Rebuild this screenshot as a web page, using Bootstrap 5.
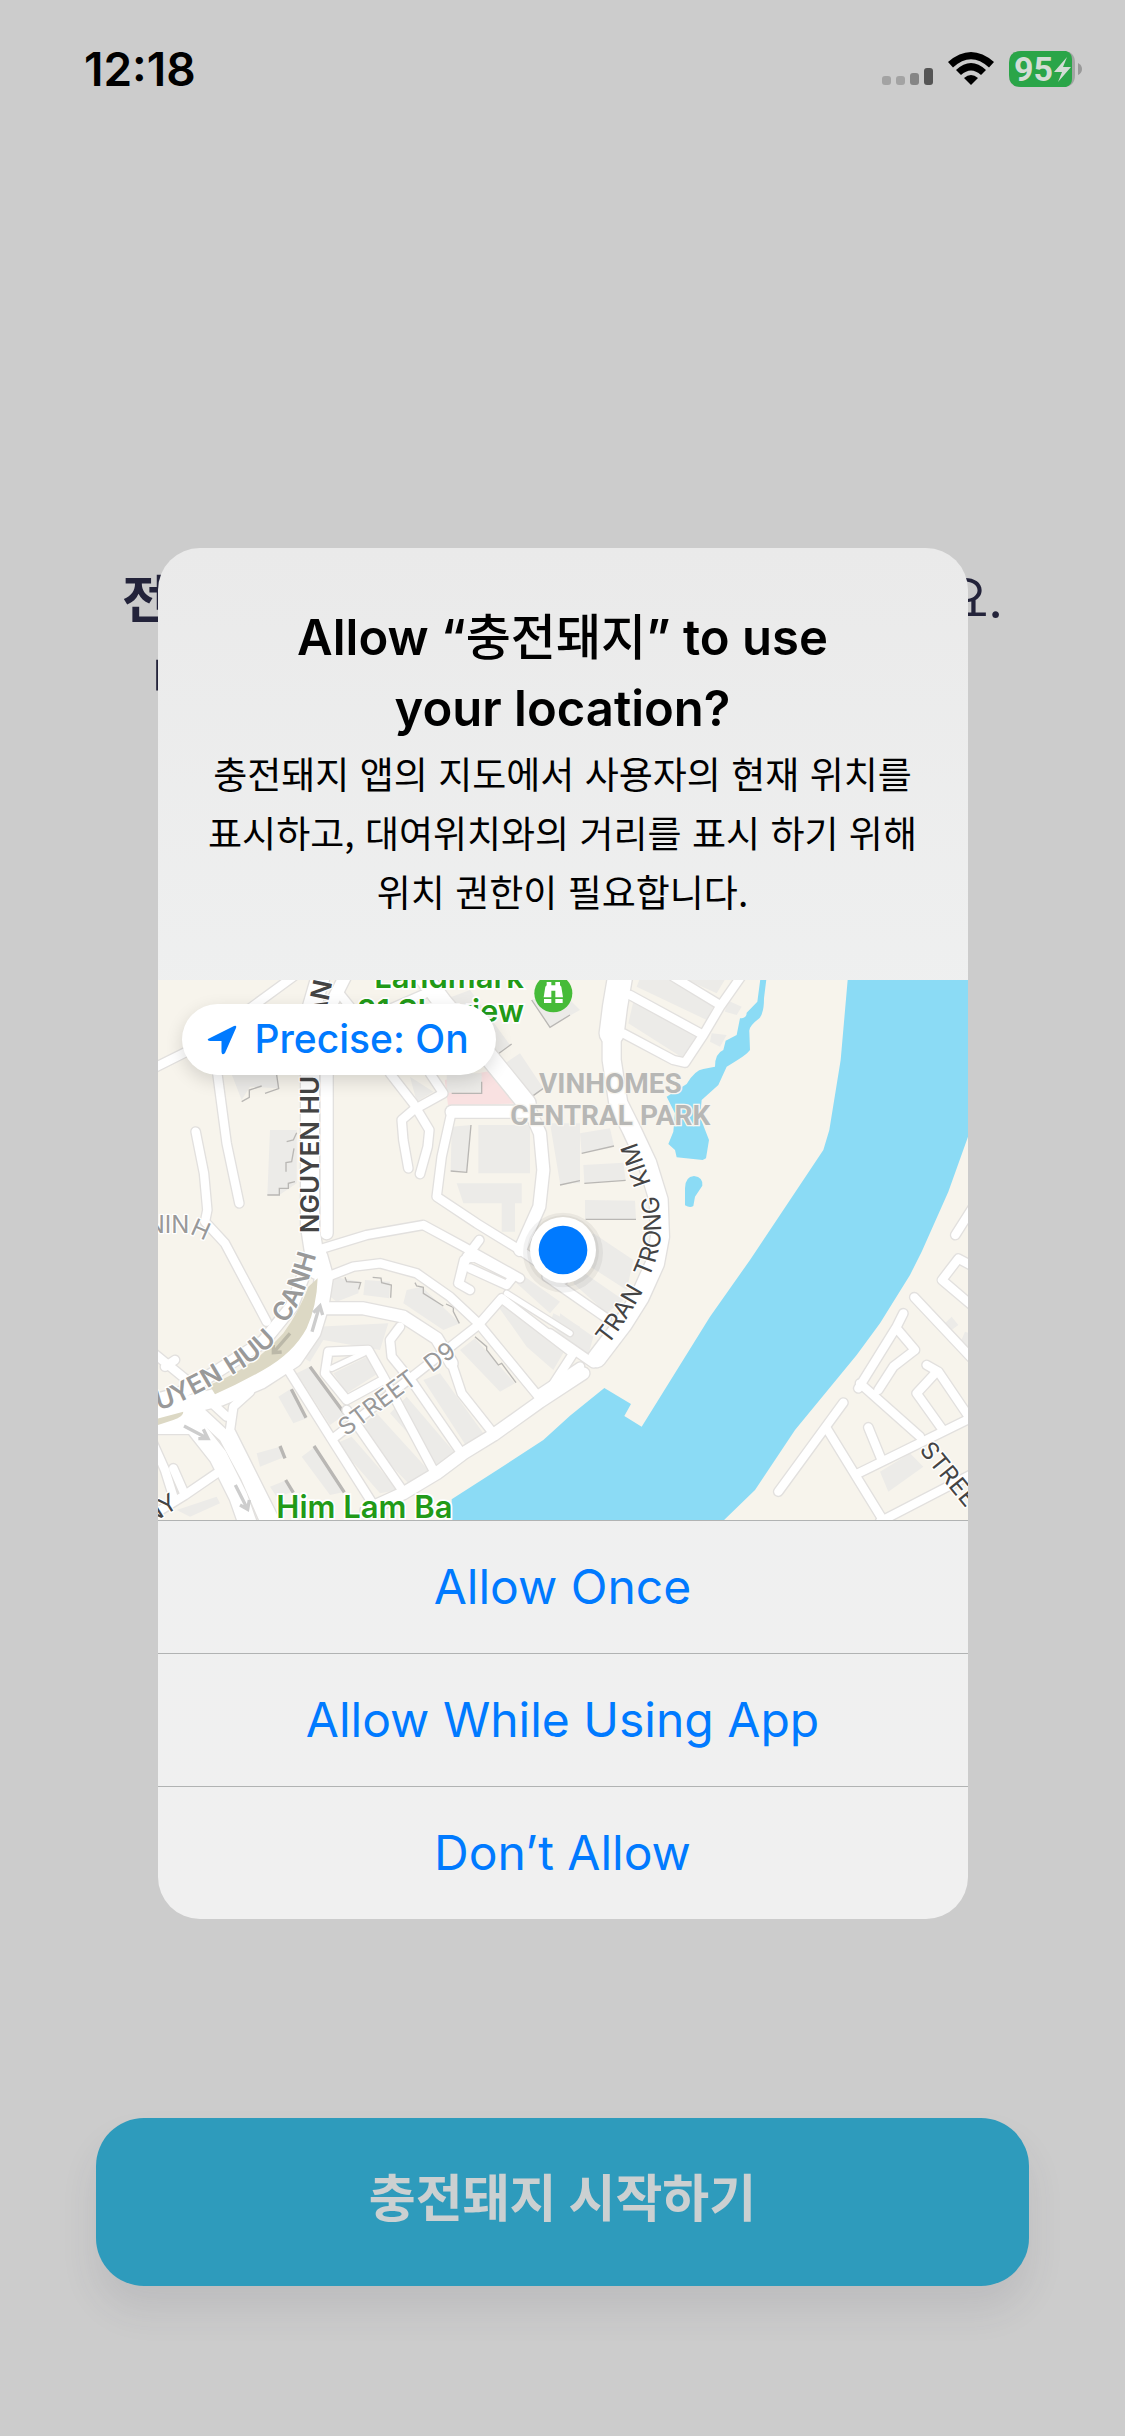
<!DOCTYPE html>
<html lang="ko">
<head>
<meta charset="utf-8">
<meta name="viewport" content="width=device-width, initial-scale=1">
<title>충전돼지</title>
<link rel="stylesheet" href="https://cdn.jsdelivr.net/npm/bootstrap@5.3.0/dist/css/bootstrap.min.css">
<style>
  :root { --ios-blue: #007aff; --hairline: #b1b3b3; }
  body { background: #ccc; color: #000; font-family: Inter, "Noto Sans CJK KR", sans-serif; }
  .status-bar { padding: 42px 42px 0 84px; height: 96px; }
  .clock-text { font-size: 46px; line-height: 54px; font-weight: 600; }
  .charge-text { font: 700 34px Roboto, sans-serif; fill: #d3dcd5; }
  .intro { padding: 464px 122px 0; color: #23233a; font-size: 51px; line-height: 80px; }
  .intro-second { padding-left: 30px; }
  .start-area { padding: 0 96px 150px; }
  .start-btn { height: 168px; padding: 0 0 6px; border-radius: 48px; font-size: 51px; font-weight: 700; background: #2e9bbc; color: #cbd0d1; box-shadow: 0 24px 36px rgba(60, 60, 80, .1); }
  .start-btn:hover, .start-btn:focus { background: #2e9bbc; color: #cbd0d1; }
  .alert-layer { padding-top: 31px; }
  .alert-sheet { width: 72%; border-radius: 42px; background: linear-gradient(#eaeaea, #eff0f0 35%, #f0f0f0); }
  .alert-head { padding: 54px 45px 59px; }
  .alert-title { font-size: 49px; line-height: 71px; font-weight: 600; margin: 0; }
  .alert-title span { font-size: 49px; line-height: 49px; font-weight: 500; }
  .alert-body { font-size: 37px; line-height: 59px; margin: 0; word-break: keep-all; font-family: "Noto Sans CJK KR", sans-serif; }
  .precise-btn { top: 24px; left: 24px; height: 71px; padding: 0 27px 0 25px; gap: 18px; font-size: 39px; font-weight: 500; color: var(--ios-blue); background: #fff; box-shadow: 0 6px 18px rgba(0, 0, 0, .14); }
  .precise-btn:hover { background: #fff; color: var(--ios-blue); }
  .choice-btn { height: 133px; border: 0; border-top: 1px solid var(--hairline); border-radius: 0; font-size: 48px; color: var(--ios-blue); }
  .choice-btn:hover { color: var(--ios-blue); border-color: var(--hairline); }

  /* Map: three drawing units to one pixel */
  .street-net { fill: none; stroke-linejoin: round; stroke-linecap: round; }
  .street-edge { --edge: 8px; stroke: #e2e0de; }
  .street-fill { --edge: 0px; stroke: #fff; }
  .r1 { stroke-width: calc(16px + var(--edge)); }
  .r2 { stroke-width: calc(25px + var(--edge)); }
  .r3 { stroke-width: calc(36px + var(--edge)); }
  .r4 { stroke-width: calc(54px + var(--edge)); }
  .r5 { stroke-width: calc(72px + var(--edge)); }
  .blocks { fill: #ecebe8; }
  .block-shade { fill: none; stroke: #b9b7b4; stroke-width: 4; }
  .water { fill: #8bdbf5; }
  .street-name { font: 400 72px Inter, sans-serif; fill: #444; stroke: #fff; stroke-width: 8px; paint-order: stroke; stroke-linejoin: round; }
  .faded { fill: #999; }
  .avenue-name { font-size: 78px; font-weight: 600; }
  .place-name { font: 600 93px Inter, sans-serif; fill: #229a17; stroke: #fff; stroke-width: 10px; paint-order: stroke; }
  .area-name { font: 700 84px Roboto, sans-serif; fill: #b7b7b5; stroke: #f7f5ef; stroke-width: 8px; paint-order: stroke; }
</style>
<script src="https://cdn.jsdelivr.net/npm/bootstrap@5.3.0/dist/js/bootstrap.bundle.min.js"></script>
</head>
<body class="min-vh-100 d-flex flex-column position-relative">

<header class="status-bar d-flex justify-content-between align-items-start">
  <span class="clock-text">12:18</span>
  <svg width="201" height="54" viewBox="882 42 201 54" role="img" aria-label="Signal, Wi-Fi, battery 95 percent">
    <g>
      <rect x="882" y="76" width="9" height="9" rx="3" fill="#a3a3a3"/>
      <rect x="896" y="76" width="9" height="9" rx="3" fill="#a3a3a3"/>
      <rect x="910" y="73" width="9" height="12" rx="3" fill="#858585"/>
      <rect x="924" y="68" width="9" height="17" rx="3" fill="#555"/>
    </g>
    <g>
      <path d="M948 62Q971 42 994 62L989 67.500Q971 51 953 67.500Z"/>
      <path d="M956 70Q971 56 986 70L981 75Q971 66 961 75Z"/>
      <path d="M964 78Q971 72 978 78L971 85Z"/>
    </g>
    <path d="M1021 51h42q12 0 12 12v12q0 12-12 12h-42q-12 0-12-12V63q0-12 12-12Z" fill="#a2a5a3"/>
    <path d="M1021 51h45q6 2 6 8v20q0 6-6 8h-45q-12 0-12-12V63q0-12 12-12Z" fill="#2aa548"/>
    <path d="M1078 63q4 2 4 6t-4 6Z" fill="#999"/>
    <text class="charge-text" x="1014" y="81">95</text>
    <path d="M1067 57l-13 15h8l-4 10 13-15h-8Z" fill="#d3dcd5"/>
  </svg>
</header>

<main class="flex-grow-1 d-flex flex-column">
  <div class="intro">
    <div class="d-flex justify-content-between"><b>전</b><span>요.</span></div>
    <div class="intro-second">배</div>
  </div>
  <div class="start-area mt-auto">
    <button type="button" class="btn start-btn w-100 border-0">충전돼지 시작하기</button>
  </div>
</main>

<div class="alert-layer position-absolute top-0 start-0 w-100 h-100 d-flex align-items-center justify-content-center">
  <section class="alert-sheet overflow-hidden" role="dialog" aria-labelledby="ask-title" aria-describedby="ask-body">
    <div class="alert-head text-center">
      <h1 class="alert-title" id="ask-title">Allow “<span>충전돼지</span>” to use<br>your location?</h1>
      <p class="alert-body" id="ask-body">충전돼지 앱의 지도에서 사용자의 현재 위치를 표시하고, 대여위치와의 거리를 표시 하기 위해 위치 권한이 필요합니다.</p>
    </div>

    <div class="position-relative">
      <svg class="d-block w-100" viewBox="0 0 2430 1620" role="img" aria-label="Map of the current location">
        <defs>
          <g id="streets">
            <!-- north-west -->
            <g transform="translate(-24 -30)">
              <path class="r2" d="M0 300L110 245L300 115L430 20"/>
              <path class="r2" d="M190 220L230 520L268 700"/>
              <path class="r2" d="M137 485L162 610L172 720L165 755L225 820L262 890L350 1055"/>
              <path class="r4" d="M515 10L480 130V300V770L500 900"/>
              <path class="r3" d="M590 10L530 130V790"/>
              <path class="r2" d="M560 60L600 110M690 130L850 60M720 310L790 400L838 480L833 530L810 612"/>
              <path class="r2" d="M840 310L880 370L790 420L755 450L760 510L775 595"/>
              <path class="r4" d="M820 20L880 100L1000 240L1130 400"/>
              <path class="r3" d="M1130 400L1170 490L1180 600L1168 710L1110 840"/>
              <path class="r3" d="M1120 425H905"/>
              <path class="r2" d="M905 425L875 560L860 680L980 760L1110 840L1240 930"/>
              <path class="r2" d="M520 835L650 795L820 765L940 830L1110 925"/>
              <path class="r2" d="M988 810L950 860L930 930"/>
            </g>
            <!-- north-east -->
            <g transform="translate(1206 -30)">
              <path class="r5" d="M182 10L165 110L155 190"/>
              <path class="r4" d="M155 190L155 270L175 400L215 480L262 580L296 690L300 800L285 880L240 980L190 1060L110 1165"/>
              <path class="r2" d="M210 75L430 195M340 20L480 105M550 10L480 110L430 195L375 278L340 270L190 190"/>
              <path class="r2" d="M1240 710L1186 795"/>
            </g>
            <!-- south-west -->
            <g transform="translate(-24 810)">
              <path class="r4" d="M505 20L522 80L508 170L485 245L430 325L330 390L210 440L100 468L0 482"/>
              <path class="r3" d="M478 30L425 170L340 275L200 365L90 430L0 455"/>
              <path class="r4" d="M0 525L130 525L205 620L265 740L300 840"/>
              <path class="r3" d="M0 480L150 490L225 560L290 680L360 840"/>
              <path class="r2" d="M0 300L110 390L230 500M75 330L45 350M300 425L250 470L240 540L290 640L390 840"/>
              <path class="r2" d="M0 560L45 660L70 740M70 655L105 735L200 670M105 735L0 800"/>
              <path class="r2" d="M415 360L550 575L680 780"/>
              <path class="r3" d="M520 175H640L760 200L860 265L905 340"/>
              <path class="r2" d="M905 340L935 430L1030 550"/>
              <path class="r2" d="M520 85L610 50L690 40L800 70L900 140L985 220L1170 445"/>
              <path class="r2" d="M550 565L800 370L985 225L1055 145L1270 310L1205 410"/>
              <path class="r3" d="M650 780L760 730L860 670L940 610L1030 555L1170 455L1300 370"/>
              <path class="r2" d="M750 230L720 270L725 320L790 400L935 610"/>
              <path class="r2" d="M590 450L525 370L535 305L655 300L700 380L850 660M590 480L760 725M590 450L700 390"/>
              <path class="r1" d="M545 355L640 310"/>
              <path class="r2" d="M960 120L925 100L942 30L970 20L1090 80L1070 105L960 55"/>
              <path class="r1" d="M1070 130L1260 250"/>
            </g>
            <!-- south-east -->
            <g transform="translate(1206 810)">
              <path class="r2" d="M-40 80L140 205M-30 250L100 340M60 350L-60 430"/>
              <path class="r2" d="M1063 142L1240 330M1240 170L1146 90L1195 26L1240 50"/>
              <path class="r2" d="M1030 190L1010 230L895 415M1010 235L1065 300L1000 350L955 420M900 400L1080 560"/>
              <path class="r2" d="M850 458L655 725M800 535L975 820M895 670L1240 500M925 532L965 630"/>
              <path class="r2" d="M1100 345L1135 365L1240 520M1130 365L1070 430L1145 535M960 815L1240 670"/>
            </g>
          </g>
          <path id="line-ninh" d="M-10 788L100 788Q150 795 240 860"/>
          <path id="line-guyen" d="M-140 530L60 470Q150 430 222 386"/>
          <path id="line-huu" d="M244 376Q330 330 420 230"/>
          <path id="line-canh" d="M405 222Q475 140 513 -50"/>
          <path id="line-tran" d="M143 1126Q205 1050 270 925"/>
          <path id="line-trong" d="M266 925Q302 850 303 780Q302 700 280 620"/>
          <path id="line-kim" d="M273 640L215 475"/>
        </defs>

        <rect width="2430" height="1620" fill="#f7f4ec"/>
        <path d="M860 300L1010 270L1100 370L870 375Z" fill="#f9e1e1"/>

        <g class="blocks">
          <g transform="translate(-24 -30)">
            <path d="M240 300H380L388 355L300 350L275 390ZM360 480H440V640L388 675H352ZM905 470L963 465L950 607L902 603ZM985 465H1140V610H985ZM920 640H1115V700H1095V785H1055V700H940ZM1065 280L1110 250L1180 355L1140 385ZM1145 90L1230 60L1290 120L1200 170ZM880 90L960 60L1080 225L1040 255ZM780 320L850 365L800 395ZM890 310H995V368H890ZM1200 460H1290V640H1230Z"/>
          </g>
          <g transform="translate(1206 -30)">
            <path d="M60 490L150 475L162 528L65 550ZM70 585L190 578L197 630L73 640ZM75 690L225 692L228 748H75ZM240 25L330 30L460 110L440 150L230 50ZM220 95L410 200L370 265L205 160ZM360 20H500L470 70ZM500 90L545 110L530 135L495 125ZM455 190L500 195L480 230L450 215ZM0 470L40 480L60 635L0 645ZM100 790L220 870L200 960L60 870Z"/>
          </g>
          <g transform="translate(-24 810)">
            <path d="M550 80L630 95L625 130L560 155L535 135ZM645 90L720 95L718 145L640 135ZM770 120L815 110L930 220L880 240L760 160ZM500 230L715 220L690 300L520 270L480 335L455 320ZM440 370L480 350L590 490L540 525ZM385 440L425 415L470 505L430 520ZM320 610L390 590L405 620L330 650ZM455 620L495 590L585 725L540 735ZM360 710L410 690L430 725L380 740ZM560 580L605 560L745 720L690 730ZM620 540L680 490L835 660L775 700ZM720 490L770 440L920 615L865 650ZM820 390L870 370L1000 550L950 590ZM930 300L975 265L1095 400L1050 425ZM1045 170L1080 160L1245 300L1210 360L1130 290ZM550 370L650 320L685 370L590 430ZM1110 70L1230 155L1200 190L1100 100ZM1210 190L1290 230V320L1200 220ZM80 780L200 740L210 760L120 800Z"/>
          </g>
          <g transform="translate(1206 810)">
            <path d="M0 190L100 260L85 315L0 250ZM60 60L190 150L140 190L40 100ZM960 665L1050 610L1090 650L985 725ZM1175 200L1195 225L1175 240L1155 220ZM1215 245L1230 250V310L1200 280Z"/>
          </g>
        </g>
        <g class="block-shade">
          <path transform="translate(-24 -30)" d="M275 395L298 382V360L335 348M345 370L386 356L380 315M440 488L430 510L410 515M432 535L425 575L408 578V605M435 635L415 640V655H388V675H352M963 465L950 607L902 603M995 335V370H905M1040 255L1085 222M1138 385L1180 355M1145 90L1200 172L1260 135"/>
          <path transform="translate(1206 -30)" d="M65 550L162 528M73 640L197 631M77 748H228M0 645L60 632"/>
          <path transform="translate(-24 810)" d="M585 82L590 95L632 98L626 118M668 82L693 84L695 98L724 105L722 143M795 98L800 108L820 112V130L880 168M888 162L910 172V185L928 220M975 260L1010 290V300L1045 345L1055 340L1098 398"/>
          <path transform="translate(-24 810)" stroke-width="10" d="M480 350L583 490M424 418L468 503M492 588L583 727M390 588L405 625M407 690L430 728"/>
        </g>

        <use href="#streets" class="street-net street-edge"/>
        <use href="#streets" class="street-net street-fill"/>

        <g transform="translate(-24 810)">
          <path fill="#dcd8c4" d="M503 85Q500 170 470 235Q430 310 340 360Q270 400 195 433L178 405Q300 360 400 250Q450 180 475 110Z"/>
          <path fill="#dcd8c4" d="M0 512L100 485Q100 500 70 510L0 533Z"/>
          <g fill="none" stroke="#cdcdcd" stroke-width="10">
            <path d="M486 245L508 170M490 188L510 168L518 195"/>
            <path d="M102 528L172 565M160 538L174 566L145 566"/>
            <path d="M256 705L292 776M270 765L293 778L298 750"/>
            <path stroke="#bbb8a8" d="M420 250L370 308M370 285V308L395 306"/>
          </g>
        </g>

        <g class="water" transform="translate(1206 -30)">
          <path d="M863 30L842 270L808 480L790 540L570 870L450 1040L245 1370L193 1338L213 1302L133 1254L30 1337L-50 1410L-180 1495L-325 1588V1660H482L585 1560L705 1380L890 1155L960 1060L1050 915L1085 845L1165 665L1224 500V30Z"/>
          <path d="M602 20H620L612 85Q612 130 598 145Q565 170 568 185L570 240Q560 255 500 290L475 345L425 390L420 440L447 510L438 565L428 570L350 562L345 540L325 522L340 485L345 430L320 380L380 342Q405 300 430 297L465 290Q465 250 490 240L497 212L530 195L540 145Q560 145 560 128L592 95Z"/>
          <path d="M375 655Q375 620 402 618Q430 622 427 647L405 680L400 708Q390 715 375 706Z"/>
        </g>

        <g class="area-name">
          <text x="1357" y="340" text-anchor="middle">VINHOMES</text>
          <text x="1357" y="435" text-anchor="middle">CENTRAL PARK</text>
        </g>
        <g class="place-name">
          <text x="1098" y="25" text-anchor="end">Landmark</text>
          <text x="1098" y="125" text-anchor="end">81 Skyview</text>
          <text x="355" y="1614">Him Lam Ba</text>
        </g>
        <g transform="translate(1186 40)">
          <circle r="57" fill="#46bb38"/>
          <path fill="#fff" d="M-20-34h14v10h12v-10h14v10l4 4 5 32H6V-8h-12v20h-23l5-32 4-4ZM-28 17h22v12h-22ZM6 17h22v12H6Z"/>
        </g>

        <g class="street-name" transform="translate(-24 -30)">
          <text class="avenue-name" transform="translate(507 790) rotate(-90)">NGUYEN HU</text>
          <text class="avenue-name" transform="translate(523 150) rotate(-78)">AN</text>
          <text class="faded"><textPath href="#line-ninh">NINH</textPath></text>
        </g>
        <g class="street-name" transform="translate(-24 810)">
          <text class="avenue-name faded"><textPath href="#line-guyen" startOffset="100%" text-anchor="end">GUYEN</textPath></text>
          <text class="avenue-name faded"><textPath href="#line-huu">HUU</textPath></text>
          <text class="avenue-name faded"><textPath href="#line-canh">CANH</textPath></text>
          <text class="faded" transform="translate(588 560) rotate(-37)">STREET</text>
          <text class="faded" transform="translate(845 370) rotate(-37)">D9</text>
          <text transform="translate(0 825) rotate(-32)">NY</text>
        </g>
        <g class="street-name" transform="translate(1206 -30)">
          <text><textPath href="#line-tran">TRAN</textPath></text>
          <text><textPath href="#line-trong">TRONG</textPath></text>
          <text><textPath href="#line-kim">KIM</textPath></text>
          <text transform="translate(1076 1440) rotate(51)">STREET</text>
        </g>

        <circle cx="1215" cy="818" r="120" fill="#000" opacity=".05"/>
        <circle cx="1215" cy="814" r="108" fill="#000" opacity=".05"/>
        <circle cx="1215" cy="810" r="99" fill="#fff"/>
        <circle cx="1215" cy="810" r="73" fill="#007aff"/>
      </svg>

      <button type="button" class="btn precise-btn position-absolute d-flex align-items-center rounded-pill border-0">
        <svg width="30" height="30" viewBox="0 0 30 30" aria-hidden="true"><path fill="currentColor" d="M2 13.500L27 1Q30 0 29 3L18 28Q15 31 14.500 27V16H3Q-1 15 2 13.500Z"/></svg>
        Precise: On
      </button>
    </div>

    <div class="d-flex flex-column">
      <button type="button" class="btn choice-btn">Allow Once</button>
      <button type="button" class="btn choice-btn">Allow While Using App</button>
      <button type="button" class="btn choice-btn">Don’t Allow</button>
    </div>
  </section>
</div>
</body>
</html>
